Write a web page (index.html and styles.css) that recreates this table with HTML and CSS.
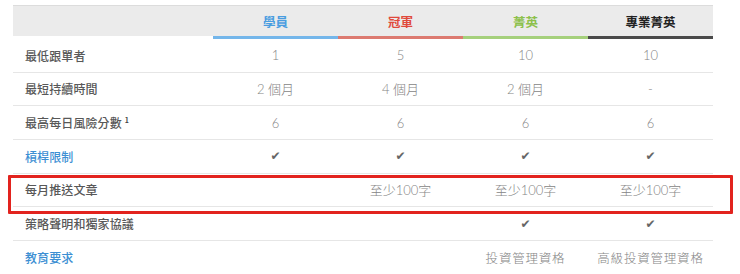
FILE: index.html
```html
<!DOCTYPE html>
<html lang="zh-Hant">
<head>
<meta charset="utf-8">
<link rel="stylesheet" href="styles.css">
</head>
<body>
<div class="page">
  <div class="table">
    <div class="row head">
      <div class="cell label"></div>
      <div class="cell plan blue">學員</div>
      <div class="cell plan red">冠軍</div>
      <div class="cell plan green">菁英</div>
      <div class="cell plan dark">專業菁英</div>
    </div>
    <div class="row">
      <div class="cell label">最低跟單者</div>
      <div class="cell val">1</div>
      <div class="cell val">5</div>
      <div class="cell val">10</div>
      <div class="cell val">10</div>
    </div>
    <div class="row">
      <div class="cell label">最短持續時間</div>
      <div class="cell val">2 個月</div>
      <div class="cell val">4 個月</div>
      <div class="cell val">2 個月</div>
      <div class="cell val">-</div>
    </div>
    <div class="row">
      <div class="cell label">最高每日風險分數<sup class="fn">1</sup></div>
      <div class="cell val">6</div>
      <div class="cell val">6</div>
      <div class="cell val">6</div>
      <div class="cell val">6</div>
    </div>
    <div class="row">
      <div class="cell label link">槓桿限制</div>
      <div class="cell val check">✔</div>
      <div class="cell val check">✔</div>
      <div class="cell val check">✔</div>
      <div class="cell val check">✔</div>
    </div>
    <div class="row">
      <div class="cell label">每月推送文章</div>
      <div class="cell val"></div>
      <div class="cell val">至少100字</div>
      <div class="cell val">至少100字</div>
      <div class="cell val">至少100字</div>
    </div>
    <div class="row">
      <div class="cell label">策略聲明和獨家協議</div>
      <div class="cell val"></div>
      <div class="cell val"></div>
      <div class="cell val check">✔</div>
      <div class="cell val check">✔</div>
    </div>
    <div class="row">
      <div class="cell label link">教育要求</div>
      <div class="cell val"></div>
      <div class="cell val"></div>
      <div class="cell val cjk">投資管理資格</div>
      <div class="cell val cjk">高級投資管理資格</div>
    </div>
  </div>
  <div class="highlight"></div>
</div>
</body>
</html>
```
FILE: styles.css
```css
html, body {
  margin: 0;
  padding: 0;
  background: #ffffff;
}
body {
  font-family: "Noto Sans CJK TC", "Noto Sans", sans-serif;
  overflow: hidden;
}
.page {
  position: relative;
  width: 740px;
  height: 274px;
  padding: 5px 0 0 13px;
  box-sizing: border-box;
}
.table {
  width: 700px;
}
.row {
  display: grid;
  grid-template-columns: 200px repeat(4, 125px);
  height: 33.67px;
  box-sizing: border-box;
  border-bottom: 1px solid #e6e6e6;
}
.cell {
  display: flex;
  align-items: center;
  justify-content: center;
  box-sizing: border-box;
}
.label {
  justify-content: flex-start;
  padding-left: 12px;
  font-size: 12px;
  font-weight: 500;
  color: #585858;
  letter-spacing: 0.1px;
}
.label.link {
  color: #3d8fd3;
}
.fn {
  font-size: 7px;
  font-weight: 700;
  color: #444;
  align-self: flex-start;
  margin-top: 9px;
  margin-left: 3px;
}
.val {
  font-family: "Lato", "Noto Sans CJK TC", sans-serif;
  font-weight: 300;
  font-size: 13px;
  color: #858585;
}
.val.cjk {
  font-family: "Noto Sans CJK TC", sans-serif;
  font-size: 12.5px;
  letter-spacing: 0.8px;
}
.check {
  font-family: "DejaVu Sans", sans-serif;
  font-weight: 400;
  font-size: 12px;
  color: #666666;
}
.head {
  height: 34px;
  background: #ebebeb;
  border-top: 1px solid #dcdcdc;
  border-bottom: none;
}
.head .cell {
  border-bottom: 3px solid transparent;
  font-size: 12.5px;
  font-weight: 700;
}
.head .blue { color: #4a9de0; border-bottom-color: #74b6ea; }
.head .red { color: #e04a3c; border-bottom-color: #dc7a70; }
.head .green { color: #8cc04a; border-bottom-color: #a5d07c; }
.head .dark { color: #222222; border-bottom-color: #4a4a4a; }
.head .label {
  border-bottom: 3px solid #ffffff;
}
.highlight {
  position: absolute;
  left: 8px;
  top: 175px;
  width: 725px;
  height: 39px;
  box-sizing: border-box;
  border: 3px solid #e2231e;
  border-radius: 1px;
}
```
